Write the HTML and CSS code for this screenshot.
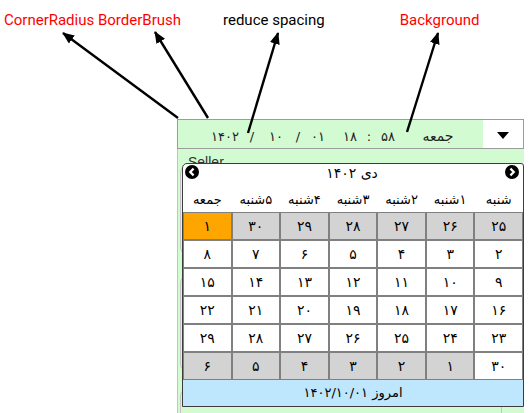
FILE: index.html
```html
<!DOCTYPE html>
<html>
<head>
    <meta charset="UTF-8">
    <title>Persian Date Picker</title>
    <link rel="stylesheet" href="styles.css">
</head>
<body>
    <div class="sheet">
        <div class="notes">
            <span class="note red">CornerRadius BorderBrush</span>
            <span class="note spacing">reduce spacing</span>
            <span class="note red bg">Background</span>
        </div>

        <div class="picker">
            <div class="datebox">
                <div class="datetext">
                    <span class="part year">۱۴۰۲</span><span class="sep s1">/</span><span class="part mon">۱۰</span><span class="sep s2">/</span><span class="part dd">۰۱</span>
                    <span class="part hh">۱۸</span><span class="sep colon">:</span><span class="part mm">۵۸</span>
                    <span class="part dayname">جمعه</span>
                </div>
                <div class="drop"><span class="caret"></span></div>
            </div>

            <div class="panel">
                <div class="seller">Seller</div>
                <div class="field f1"></div>
                <div class="field f2"></div>
                <div class="field f3"></div>

                <div class="popup">
                    <div class="head">
                        <svg class="nav" width="14" height="14" viewBox="0 0 14 14">
                            <circle cx="7" cy="7" r="7" fill="#000"/>
                            <path d="M8.6 3.6 L5.2 7 L8.6 10.4" fill="none" stroke="#fff" stroke-width="2.2"/>
                        </svg>
                        <div class="month" dir="rtl">دی ۱۴۰۲</div>
                        <svg class="nav" width="14" height="14" viewBox="0 0 14 14">
                            <circle cx="7" cy="7" r="7" fill="#000"/>
                            <path d="M5.4 3.6 L8.8 7 L5.4 10.4" fill="none" stroke="#fff" stroke-width="2.2"/>
                        </svg>
                    </div>
                    <div class="weekdays" dir="rtl">
                        <span>شنبه</span>
                        <span>۱شنبه</span>
                        <span>۲شنبه</span>
                        <span>۳شنبه</span>
                        <span>۴شنبه</span>
                        <span>۵شنبه</span>
                        <span>جمعه</span>
                    </div>
                    <div class="days" dir="rtl">
                        <span class="out">۲۵</span><span class="out">۲۶</span><span class="out">۲۷</span><span class="out">۲۸</span><span class="out">۲۹</span><span class="out">۳۰</span><span class="picked">۱</span>
                        <span>۲</span><span>۳</span><span>۴</span><span>۵</span><span>۶</span><span>۷</span><span>۸</span>
                        <span>۹</span><span>۱۰</span><span>۱۱</span><span>۱۲</span><span>۱۳</span><span>۱۴</span><span>۱۵</span>
                        <span>۱۶</span><span>۱۷</span><span>۱۸</span><span>۱۹</span><span>۲۰</span><span>۲۱</span><span>۲۲</span>
                        <span>۲۳</span><span>۲۴</span><span>۲۵</span><span>۲۶</span><span>۲۷</span><span>۲۸</span><span>۲۹</span>
                        <span>۳۰</span><span class="out">۱</span><span class="out">۲</span><span class="out">۳</span><span class="out">۴</span><span class="out">۵</span><span class="out">۶</span>
                    </div>
                    <div class="today" dir="rtl">امروز ۱۴۰۲/۱۰/۰۱</div>
                </div>
            </div>
        </div>

        <!-- callout arrows from the notes to the parts of the picker -->
        <svg class="arrows" width="532" height="413" viewBox="0 0 532 413">
            <defs>
                <marker id="tip" markerUnits="userSpaceOnUse" markerWidth="12" markerHeight="10" refX="11" refY="5" orient="auto">
                    <path d="M0 0 L12 5 L0 10 z" fill="#000"/>
                </marker>
            </defs>
            <line x1="178" y1="118" x2="63" y2="33" marker-end="url(#tip)"/>
            <line x1="208" y1="118" x2="155" y2="32" marker-end="url(#tip)"/>
            <line x1="248" y1="133" x2="278" y2="33" marker-end="url(#tip)"/>
            <line x1="407" y1="132" x2="438" y2="33" marker-end="url(#tip)"/>
        </svg>
    </div>
</body>
</html>
```

FILE: styles.css
```css
body {
    margin: 0;
    font-family: Roboto, sans-serif;
    background: #fff;
}
.sheet {
    position: relative;
    width: 532px;
    height: 413px;
    overflow: hidden;
}

/* annotation labels */
.notes {
    display: flex;
    padding: 11px 0 0 4px;
    height: 18px;
    font-size: 15px;
    line-height: 18px;
}
.note.red {
    color: #ff0000;
}
.note.spacing {
    margin-left: 42px;
    color: #000;
}
.note.bg {
    margin-left: 75px;
}
.arrows {
    position: absolute;
    left: 0;
    top: 0;
    pointer-events: none;
}
.arrows line {
    stroke: #000;
    stroke-width: 2.4;
}

/* picker */
.picker {
    margin: 90px 0 0 177px;
    width: 347px;
    font-family: "DejaVu Sans", sans-serif;
}
.datebox {
    display: flex;
    height: 28px;
    border: 1px solid #9c9c9c;
    background: #d2fbd2;
}
.datetext {
    flex: 1;
    display: flex;
    align-items: center;
    padding-left: 30px;
    padding-top: 4px;
    font-size: 13px;
    color: #222;
}
.datetext span {
    text-align: center;
}
.year { width: 34px; }
.s1 { width: 20px; }
.mon { width: 28px; }
.s2 { width: 16px; }
.dd { width: 24px; }
.hh { width: 24px; margin-left: 8px; }
.colon { width: 14px; }
.mm { width: 24px; }
.dayname {
    width: 42px;
    margin-left: 17px;
    font-size: 14px;
}
.drop {
    width: 40px;
    background: #fff;
    display: flex;
    align-items: center;
    justify-content: center;
}
.caret {
    width: 0;
    height: 0;
    border-left: 6px solid transparent;
    border-right: 6px solid transparent;
    border-top: 7px solid #000;
    margin-top: 2px;
}

.panel {
    position: relative;
    height: 264px;
    background: #d2fbd2;
    border-left: 1px solid #a6d8a6;
    padding-left: 2px;
}
.seller {
    font-family: "Liberation Sans", sans-serif;
    font-size: 14px;
    line-height: 14px;
    padding: 6px 0 0 8px;
    color: #333;
}
.field {
    width: 320px;
    border: 1px solid #c4c4c4;
    border-radius: 8px;
}
.f1 {
    height: 88px;
    margin-top: -4px;
}
.f2 {
    height: 95px;
    margin-top: 20px;
}
.f3 {
    height: 40px;
    margin-top: 16px;
}

/* calendar dropdown, drawn over the form */
.popup {
    position: absolute;
    left: 4px;
    top: 14px;
    width: 340px;
    background: #fff;
    border: 1px solid #3c3c3c;
    border-radius: 5px 3px 0 0;
    color: #000;
}
.head {
    display: flex;
    justify-content: space-between;
    align-items: flex-start;
    height: 23px;
    padding: 1px 4px 0 2px;
    box-sizing: border-box;
}
.month {
    font-size: 14px;
    line-height: 16px;
}
.weekdays {
    display: grid;
    grid-template-columns: repeat(7, 1fr);
    height: 25px;
    align-items: center;
    font-size: 13px;
}
.weekdays span {
    text-align: center;
    white-space: nowrap;
}
.days {
    display: grid;
    grid-template-columns: repeat(7, 1fr);
    grid-template-rows: repeat(6, 28px);
}
.days span {
    display: flex;
    align-items: center;
    justify-content: center;
    border: 1px solid #808080;
    font-size: 14px;
    background: #fff;
}
.days .out {
    background: #d3d3d3;
}
.days .picked {
    background: #ffa500;
}
.today {
    height: 26px;
    line-height: 26px;
    text-align: center;
    font-size: 13px;
    background: #bee6fd;
}
```
